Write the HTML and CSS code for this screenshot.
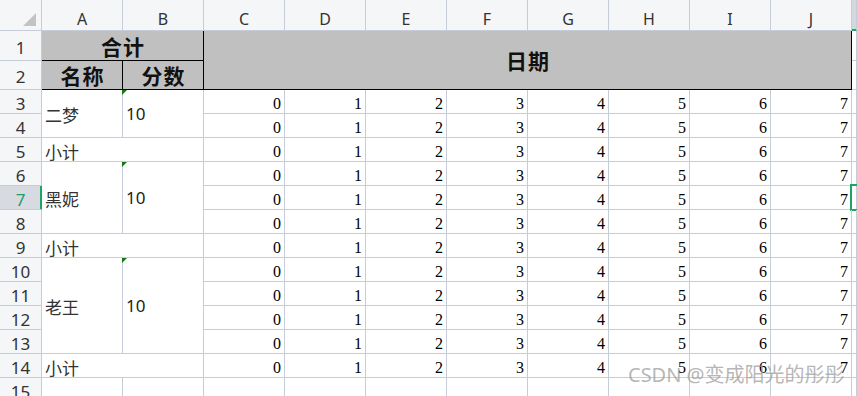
FILE: index.html
```html
<!DOCTYPE html>
<html lang="zh-CN">
<head>
    <meta charset="UTF-8">
    <meta name="viewport" content="width=device-width, initial-scale=1.0">
    <title>合计表</title>
    <link rel="stylesheet" href="styles.css">
</head>
<body>
    <div id="sheet" class="sheet"></div>
    <div class="watermark">CSDN @变成阳光的彤彤</div>

    <script>
        const sheet = document.getElementById('sheet');
        const letters = ['A', 'B', 'C', 'D', 'E', 'F', 'G', 'H', 'I', 'J'];
        const groups = [
            { name: '二梦', score: 10, rows: 2 },
            { name: '黑妮', score: 10, rows: 3 },
            { name: '老王', score: 10, rows: 4 }
        ];
        const activeRow = 7;

        function cell(cls, text, rowSpan, colSpan) {
            const div = document.createElement('div');
            div.className = 'cell ' + cls;
            if (text !== undefined) div.textContent = text;
            if (rowSpan > 1) div.style.gridRowEnd = `span ${rowSpan}`;
            if (colSpan > 1) div.style.gridColumnEnd = `span ${colSpan}`;
            sheet.appendChild(div);
            return div;
        }

        function rowHead(n) {
            cell(n === activeRow ? 'rowhead active' : 'rowhead', n);
        }

        function numbers() {
            for (let i = 0; i < 8; i++) cell('num', i);
        }

        // header row
        const corner = cell('corner');
        corner.innerHTML = '<span class="corner-mark"></span>';
        letters.forEach(l => cell('colhead', l));
        cell('colhead sel');

        // rows 1-2
        rowHead(1);
        cell('title', '合计', 1, 2);
        cell('title', '日期', 2, 8);
        cell('blank');
        rowHead(2);
        cell('title', '名称');
        cell('title', '分数');
        cell('blank');

        let row = 3;
        groups.forEach(g => {
            for (let i = 0; i < g.rows; i++) {
                rowHead(row);
                if (i === 0) {
                    cell('name', g.name, g.rows);
                    cell('score mark', g.score, g.rows);
                }
                numbers();
                cell(row === activeRow ? 'blank sel' : 'blank');
                row++;
            }
            rowHead(row);
            cell('subtotal', '小计', 1, 2);
            numbers();
            cell('blank');
            row++;
        });

        rowHead(row);
        for (let i = 0; i < 11; i++) cell('blank');
    </script>
</body>
</html>
```

FILE: styles.css
```css
body {
    margin: 0;
    background-color: #fff;
    overflow: hidden;
    font-family: "Noto Sans", "Noto Sans CJK SC", sans-serif;
    color: #222;
}
.sheet {
    display: grid;
    grid-template-columns: 42px repeat(10, 81px) 5px;
    grid-template-rows: 31px 30px 29px;
    grid-auto-rows: 24px;
    width: 857px;
}
.cell {
    box-sizing: border-box;
    border-right: 1px solid #c6ccd8;
    border-bottom: 1px solid #c6ccd8;
    display: flex;
    min-width: 0;
    white-space: nowrap;
    position: relative;
}
.corner, .colhead, .rowhead {
    background-color: #f5f6f8;
    color: #333;
    font-size: 16px;
    justify-content: center;
    align-items: center;
}
.corner {
    justify-content: flex-end;
    align-items: flex-end;
    padding: 0 5px 4px 0;
}
.corner-mark {
    width: 13px;
    height: 13px;
    background-color: #c3c3c3;
    clip-path: polygon(100% 0, 100% 100%, 0 100%);
}
.colhead {
    padding-top: 8px;
}
.colhead.sel {
    background-color: #d3d7de;
    border-bottom-color: #21a366;
    box-shadow: inset 0 -1px 0 #21a366;
}
.rowhead {
    padding-top: 3px;
    font-size: 17px;
}
.rowhead.active {
    background-color: #d7dae0;
    color: #1f9d63;
    border-right-color: #21a366;
    box-shadow: inset -1px 0 0 #21a366;
}
.title {
    background-color: #c0c0c0;
    border-color: #000;
    justify-content: center;
    align-items: center;
    font-family: "Noto Sans CJK SC", sans-serif;
    font-size: 21px;
    font-weight: bold;
    letter-spacing: 1px;
    padding-left: 1px;
    color: #111;
}
.name {
    align-items: center;
    padding: 2px 0 0 3px;
    font-family: "Noto Sans CJK SC", sans-serif;
    font-size: 17px;
    color: #333;
}
.score {
    align-items: center;
    padding-left: 3px;
    font-size: 17px;
}
.mark::before {
    content: '';
    position: absolute;
    left: -1px;
    top: 0;
    border-top: 5px solid #137a13;
    border-right: 5px solid transparent;
}
.subtotal {
    align-items: flex-end;
    padding: 0 0 1px 3px;
    line-height: 17px;
    font-family: "Noto Sans CJK SC", sans-serif;
    font-size: 17px;
    color: #333;
}
.num {
    justify-content: flex-end;
    align-items: flex-end;
    padding: 0 3px 1px 0;
    font-family: "Liberation Serif", "Times New Roman", serif;
    font-size: 16px;
    line-height: 16px;
    color: #000;
}
.blank.sel::after {
    content: '';
    position: absolute;
    left: -2px;
    top: -2px;
    width: 30px;
    height: 27px;
    box-sizing: border-box;
    border: 2px solid #21a366;
}
.watermark {
    position: absolute;
    left: 628px;
    top: 365px;
    font-family: "Noto Sans", "Noto Sans CJK SC", sans-serif;
    font-size: 20px;
    line-height: 20px;
    color: rgba(150, 150, 150, 0.7);
}
```
